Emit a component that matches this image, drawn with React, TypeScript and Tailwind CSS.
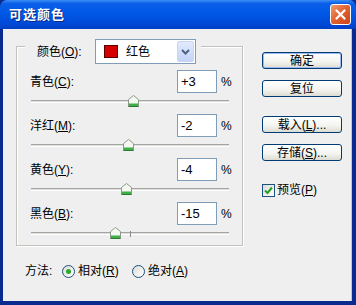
import React from "react";

interface SliderRow {
  label: string;
  key: string;
  value: string;
  thumb: number;
  tick?: boolean;
}

const rows: SliderRow[] = [
  { label: "青色", key: "C", value: "+3", thumb: 111 },
  { label: "洋红", key: "M", value: "-2", thumb: 106 },
  { label: "黄色", key: "Y", value: "-4", thumb: 104 },
  { label: "黑色", key: "B", value: "-15", thumb: 93, tick: true },
];

const Thumb: React.FC = () => (
  <svg width="11" height="12" viewBox="0 0 11 12">
    <path d="M0.5 11.5 V4.5 L5.5 0.5 L10.5 4.5 V11.5 Z" fill="#f4f8f0" stroke="#8a9a8a" />
    <rect x="1" y="8.5" width="9" height="3" fill="#3fae49" />
    <path d="M0.5 11.5 H10.5" stroke="#2a7a32" />
  </svg>
);

const Button: React.FC<{ children: React.ReactNode; primary?: boolean; className?: string }> = ({
  children,
  primary,
  className,
}) => (
  <div
    className={
      "w-[80px] h-[17px] rounded-[3px] border border-[#003c74] bg-[linear-gradient(to_bottom,#ffffff,#f3f3ef_60%,#dcdcd2)] flex items-center justify-center text-[12px] leading-none text-black " +
      (primary ? "shadow-[inset_0_0_0_1px_#9dbbf0] " : "") +
      (className ?? "")
    }
  >
    {children}
  </div>
);

const Radio: React.FC<{ checked?: boolean }> = ({ checked }) => (
  <div className="w-[13px] h-[13px] rounded-full border border-[#1c5180] bg-[linear-gradient(135deg,#dcdcd6,#ffffff)] flex items-center justify-center">
    {checked && <div className="w-[5px] h-[5px] rounded-full bg-[#2da82d]" />}
  </div>
);

const App: React.FC = () => {
  return (
    <div className="w-[356px] h-[305px] flex flex-col bg-[#0b2a8f] font-['Liberation_Sans','Noto_Sans_CJK_SC',sans-serif] text-[12px] text-black">
      {/* title bar */}
      <div className="h-[29px] shrink-0 flex items-center justify-between pl-[9px] pr-[5px] rounded-t-[7px] bg-[linear-gradient(to_bottom,#3c8ef6_0%,#0b5fe8_12%,#0058e6_45%,#004ad8_80%,#0040c4_100%)]">
        <span className="text-white font-bold text-[13px] tracking-[1px] [text-shadow:1px_1px_0_#0a2a80]">
          可选颜色
        </span>
        <div className="w-[21px] h-[21px] rounded-[3px] border border-white bg-[linear-gradient(135deg,#f29a70,#e0602f_50%,#c8431a)] flex items-center justify-center">
          <svg width="11" height="11" viewBox="0 0 11 11">
            <path d="M1.5 1.5 L9.5 9.5 M9.5 1.5 L1.5 9.5" stroke="#fff" strokeWidth="2.2" strokeLinecap="round" />
          </svg>
        </div>
      </div>

      {/* client area */}
      <div className="flex-1 flex ml-[3px] mr-[4px] mb-[4px] bg-[#efefef] border-r border-[#b8c8e8]">
        {/* left column */}
        <div className="flex flex-col pl-[13px] pt-[17px]">
          <div className="w-[227px] h-[200px] border border-[#c2c2bc] shadow-[inset_1px_1px_0_#ffffff,1px_1px_0_#ffffff] flex flex-col">
            {/* legend row */}
            <div className="-mt-[8px] ml-[8px] w-fit h-[25px] flex items-center pl-[12px] pr-[5px] bg-[#efefef]">
              <span className="w-[58px]">
                颜色(<u>O</u>):
              </span>
              <div className="w-[101px] h-[25px] bg-white border border-[#7f9db9] flex items-center">
                <div className="ml-[8px] w-[14px] h-[13px] bg-[#d50000] border border-[#5a0000]" />
                <span className="ml-[8px]">红色</span>
                <div className="ml-auto mr-[1px] w-[17px] h-[21px] rounded-[2px] bg-[linear-gradient(to_bottom,#e1eafd,#c3d4f8)] border border-[#c8d6f5] flex items-center justify-center">
                  <svg width="9" height="6" viewBox="0 0 9 6">
                    <path d="M1 1 L4.5 4.5 L8 1" fill="none" stroke="#4d6185" strokeWidth="2" />
                  </svg>
                </div>
              </div>
            </div>

            <div className="mt-[6px] flex flex-col">
              {rows.map((r) => (
                <div key={r.key} className="h-[44px] flex flex-col">
                  <div className="h-[23px] flex items-center pl-[13px] pr-[12px]">
                    <span className="flex-1">
                      {r.label}(<u>{r.key}</u>):
                    </span>
                    <div className="w-[40px] h-[23px] bg-white border border-[#7f9db9] flex items-center pl-[3px] text-[13px]">
                      {r.value}
                    </div>
                    <span className="ml-[4px] w-[9px] text-[12px]">%</span>
                  </div>
                  <div className="relative h-[21px] pl-[14px]">
                    <div className="mt-[7px] w-[198px] h-[3px] border-t border-[#a5a5a0] border-b border-b-white bg-[#dedede]" />
                    {r.tick && <div className="absolute left-[113px] top-[6px] w-px h-[6px] bg-[#8a8a8a]" />}
                    <div className="absolute top-[2px]" style={{ left: r.thumb }}>
                      <Thumb />
                    </div>
                  </div>
                </div>
              ))}
            </div>
          </div>

          {/* method row */}
          <div className="mt-[17px] ml-[9px] h-[16px] flex items-center">
            <span className="w-[37px]">方法:</span>
            <Radio checked />
            <span className="ml-[3px] w-[54px]">
              相对(<u>R</u>)
            </span>
            <Radio />
            <span className="ml-[3px]">
              绝对(<u>A</u>)
            </span>
          </div>
        </div>

        {/* right column */}
        <div className="ml-[19px] pt-[23px] flex flex-col">
          <Button primary>确定</Button>
          <Button className="mt-[11px]">复位</Button>
          <Button className="mt-[19px]">
            载入(<u>L</u>)...
          </Button>
          <Button className="mt-[11px]">
            存储(<u>S</u>)...
          </Button>
          <div className="mt-[20px] flex items-center">
            <div className="w-[13px] h-[13px] border border-[#1c5180] bg-[linear-gradient(135deg,#dcdcd6,#ffffff)] flex items-center justify-center">
              <svg width="9" height="9" viewBox="0 0 9 9">
                <path d="M1 4.5 L3.5 7 L8 1.5" fill="none" stroke="#21a121" strokeWidth="2" />
              </svg>
            </div>
            <span className="ml-[2px]">
              预览(<u>P</u>)
            </span>
          </div>
        </div>
      </div>
    </div>
  );
};

export default App;
